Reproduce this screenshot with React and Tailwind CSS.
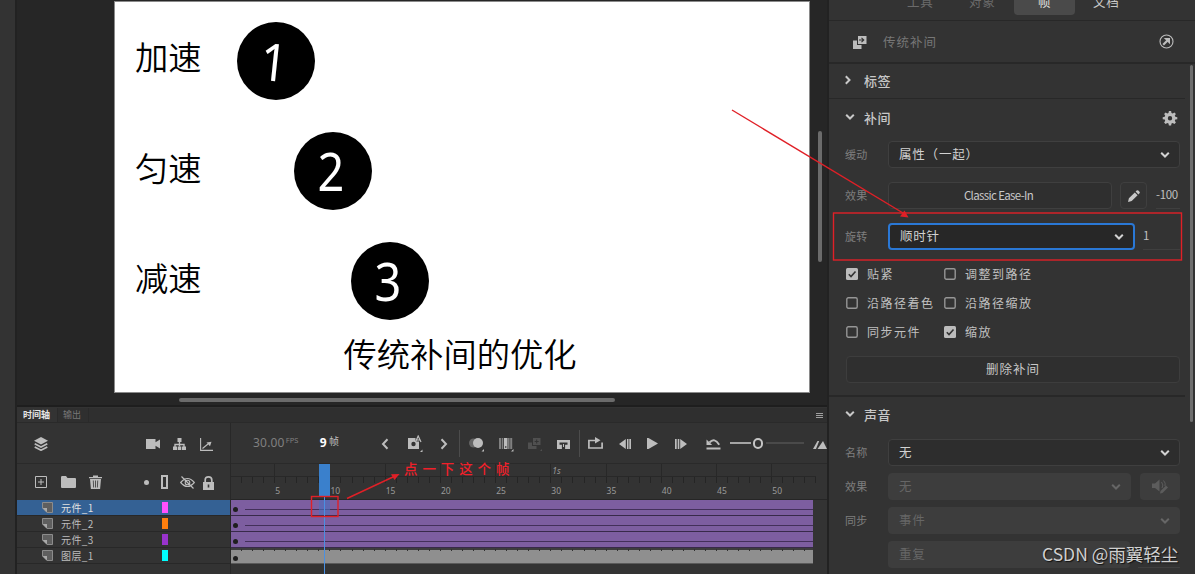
import React from 'react';
import clsx from 'clsx';

const LAYERS = [
  { name: '元件_1', swatch: 'bg-[#ff50ff]', selected: true },
  { name: '元件_2', swatch: 'bg-[#ff7f0e]' },
  { name: '元件_3', swatch: 'bg-[#9933cc]' },
  { name: '图层_1', swatch: 'bg-[#00ffff]', still: true },
];

const FRAMES = Array.from({ length: 53 }, (_, i) => i + 1);

const CHECKS = [
  { label: '贴紧', on: true },
  { label: '调整到路径' },
  { label: '沿路径着色' },
  { label: '沿路径缩放' },
  { label: '同步元件' },
  { label: '缩放', on: true },
];

const Icon = ({ w = 16, h = 16, className, children }) => (
  <svg
    width={w}
    height={h}
    viewBox={`0 0 ${w} ${h}`}
    fill="currentColor"
    className={clsx('block shrink-0', className)}
    aria-hidden
  >
    {children}
  </svg>
);

const Chevron = ({ className }) => (
  <Icon w={10} h={8} className={className}>
    <path d="M1.2 1.8 5 5.500 8.800 1.800" fill="none" stroke="currentColor" strokeWidth="2" />
  </Icon>
);

/* ---------- stage ---------- */

const Ball = ({ className, digit, turned }) => (
  <div
    className={clsx(
      'absolute flex h-[78px] w-[78px] items-center justify-center rounded-full bg-black',
      className,
    )}
  >
    <span
      className={clsx(
        "-ml-[4px] scale-x-90 font-['Noto_Sans'] text-[52px] leading-none font-normal text-white",
        turned && 'rotate-[6deg]',
      )}
    >
      {digit}
    </span>
  </div>
);

const Stage = () => (
  <div className="flex h-[407px] shrink-0 flex-col border-b-2 border-[#1e1e1e] bg-[#262626]">
    <div className="flex">
      <div className="relative ml-[97px] mt-px h-[392px] w-[696px] shrink-0 border border-[#8a8a8a] bg-white text-[33.3px] leading-[40px] font-[350] text-black">
        <span className="absolute left-[20px] top-[34px]">加速</span>
        <span className="absolute left-[20px] top-[145px]">匀速</span>
        <span className="absolute left-[20px] top-[255px]">减速</span>
        <Ball className="left-[121.5px] top-[19.5px]" digit="1" turned />
        <Ball className="left-[178.5px] top-[129.5px]" digit="2" />
        <Ball className="left-[236px] top-[240px]" digit="3" />
        <span className="absolute left-[228.5px] top-[331px] whitespace-nowrap">传统补间的优化</span>
      </div>
      <div className="ml-[8px] mt-[131px] h-[131px] w-[4px] rounded-full bg-[#6b6b6b]" />
    </div>
    <div className="ml-[162px] mt-[5px] h-[4px] w-[436px] shrink-0 rounded-full bg-[#6b6b6b]" />
  </div>
);

/* ---------- timeline ---------- */

const TimelineTabs = () => (
  <div className="flex h-[15px] shrink-0 items-stretch border-b border-[#2a2a2a] bg-[#2f2f2f] text-[9px] leading-[13px]">
    <div className="w-[41px] border-r border-[#2a2a2a] bg-[#333] pl-[6px] font-bold text-[#e6e6e6]">时间轴</div>
    <div className="w-[31px] border-r border-[#2a2a2a] pl-[5px] text-[#777]">输出</div>
    <Icon w={7} h={5} className="mr-[4px] ml-auto mt-[5px] text-[#a0a0a0]">
      <path d="M0 0h7v1H0zM0 2h7v1H0zM0 4h7v1H0z" />
    </Icon>
  </div>
);

const LayerTools = () => (
  <div className="flex h-[41px] items-center border-b border-[#2a2a2a] text-[#bdbdbd]">
    <Icon w={14} h={14} className="ml-[17px] mt-[2px]">
      <path d="M7 0 14 3.7 7 7.4 0 3.7z" />
      <path d="M0.7 6.7 7 10 13.3 6.7M0.7 10 7 13.2 13.3 10" fill="none" stroke="currentColor" strokeWidth="1.7" />
    </Icon>
    <Icon w={14} h={10} className="ml-[98px] mt-[2px]">
      <path d="M0 0h9.500v3.200L14 .5v9L9.500 6.800V10H0z" />
    </Icon>
    <Icon w={13} h={12} className="ml-[13px] mt-[2px]">
      <path d="M4.500 0h4v4h-4zM0 8.500h4V12H0zM4.700 8.500h3.600V12H4.700zM9 8.500h4V12H9z" />
      <path d="M6.500 3v5.500M2 9V6.500h9V9" fill="none" stroke="currentColor" strokeWidth="1.400" />
    </Icon>
    <Icon w={13} h={13} className="ml-[14px] mt-[3px]">
      <path d="M.6 0v12.400H13M2.500 10.500 8 6" fill="none" stroke="currentColor" strokeWidth="1.100" />
      <path d="M6.500 4.500 11.500 3.800 10 8.300z" />
    </Icon>
  </div>
);

const LayerHeader = () => (
  <div className="flex h-[36px] items-center text-[#bdbdbd]">
    <Icon w={12} h={12} className="ml-[18px]">
      <path d="M.5.5h11v11H.5zM6 3v6M3 6h6" fill="none" stroke="currentColor" />
    </Icon>
    <Icon w={15} h={12} className="ml-[14px]">
      <path d="M0 1.200Q0 0 1.200 0H5l1.500 2H14q1 0 1 1v8q0 1-1 1H1q-1 0-1-1z" />
    </Icon>
    <Icon w={13} h={14} className="ml-[13px]">
      <path d="M0 2h4V.5h5V2h4v1.300H0zM1 4h11l-.9 10H1.900z" />
      <path d="M4.300 5.500l.3 7M6.500 5.500v7M8.700 5.500l-.3 7" stroke="#444" strokeWidth=".9" />
    </Icon>
    <div className="ml-[42px] h-[5px] w-[5px] rounded-full bg-[#bdbdbd]" />
    <div className="ml-[12px] h-[14px] w-[7px] border-2 border-[#bdbdbd]" />
    <Icon w={15} h={13} className="ml-[12px]">
      <path d="M.7 6.500Q7.500-1.500 14.300 6.500 7.500 14.500.7 6.500zM1.500.5 13.500 12.500" fill="none" stroke="currentColor" strokeWidth="1.200" />
      <circle cx="7.500" cy="6.500" r="2.300" fill="none" stroke="currentColor" strokeWidth="1.100" />
    </Icon>
    <Icon w={11} h={14} className="ml-[8px] mt-[1px]">
      <path d="M0 6h11v8H0z" />
      <path d="M2.200 7V4Q2.200.9 5.500.9T8.800 4v3" fill="none" stroke="currentColor" strokeWidth="1.700" />
      <path d="M4.700 8.500h1.600v3H4.700z" fill="#333" />
    </Icon>
  </div>
);

const LayerRow = ({ layer }) => (
  <div
    className={clsx(
      'flex h-[16.1px] items-center border-b border-[#282828] text-[#bdbdbd]',
      layer.selected && 'bg-[#346194] text-[#e0e0e0]',
    )}
  >
    <Icon w={11} h={11} className="ml-[25px] text-[#8c8c8c]">
      <path d="M.5.5h10v10H5L.5 6z" fill="#5f5f5f" stroke="currentColor" />
      <path d="M.5 6H5v4.500z" fill="#aaa" />
    </Icon>
    <span className="ml-[8px] w-[101px] text-[10px] leading-[14px] tracking-[0.400px]">{layer.name}</span>
    <div className={clsx('h-[11px] w-[6px]', layer.swatch)} />
  </div>
);

const Playback = () => (
  <div className="flex h-[41px] items-center overflow-hidden border-b border-[#2a2a2a] font-['Noto_Sans','Noto_Sans_CJK_SC',sans-serif] text-[#bdbdbd]">
    <span className="ml-[22px] w-[35px] text-[12px] leading-none tracking-[0.200px] text-[#808080]">30.00</span>
    <span className="-mt-[4px] w-[36px] text-[7.500px] leading-none text-[#808080]">FPS</span>
    <span className="w-[10px] text-[12px] leading-none font-bold text-white">9</span>
    <span className="-mt-[5px] w-[12px] text-[10px] leading-none">帧</span>
    <Icon w={8} h={12} className="ml-[41px] mt-[2px]">
      <path d="M6.500 1.200 2 6l4.500 4.800" fill="none" stroke="currentColor" strokeWidth="2" />
    </Icon>
    <Icon w={15} h={17} className="ml-[19px]">
      <path d="M0 3h7.500v3.500H11V14H0z" />
      <circle cx="5.500" cy="9" r="2.200" fill="#333" />
      <path d="M7.500 7 10.200 1 13 7M8.500 5h3.500" fill="none" stroke="currentColor" strokeWidth="1.200" />
      <path d="M14.500 14.500V17H12z" />
    </Icon>
    <Icon w={8} h={12} className="ml-[17px] mt-[2px]">
      <path d="M1.500 1.200 6 6l-4.500 4.800" fill="none" stroke="currentColor" strokeWidth="2" />
    </Icon>
    <div className="ml-[11px] h-[27px] w-px bg-[#4c4c4c]" />
    <Icon w={16} h={14} className="ml-[9px] mt-[4px]">
      <circle cx="4.500" cy="5" r="4.500" fill="#666" />
      <circle cx="9" cy="5" r="5" />
      <path d="M15 11v2.500h-2.500z" />
    </Icon>
    <Icon w={15} h={14} className="ml-[14px] mt-[4px]">
      <path d="M0 0h2v11H0zM2.700 0h1.600v11H2.700zM9 0h1.600v11H9zM11.200 0h2v11h-2z" fill="#808080" />
      <path d="M5 0h3.500v11H5zM14.500 11v2.500H12z" />
      <path d="M6.300 8h1v2h-1z" fill="#333" />
    </Icon>
    <Icon w={14} h={14} className="ml-[14px] mt-[3px] text-[#505050]">
      <path d="M0 4.500h4V8h4.500v3H0zM5 0h7.500v7H5zM14 11v2h-2z" />
      <path d="M8.700 1.500v4M6.700 3.500h4" stroke="#333" />
    </Icon>
    <Icon w={13} h={9} className="ml-[15px] mt-[2px]">
      <path fillRule="evenodd" d="M0 0h13v9H0zM2.500 2.500v2.300h2.400V9h3.200V4.800h2.400V2.500z" />
      <path d="M6 4h1v3H6z" />
    </Icon>
    <div className="ml-[9px] h-[27px] w-px bg-[#4c4c4c]" />
    <Icon w={15} h={12} className="ml-[8px]">
      <path d="M3 3.500H.9V11h13.200V5.500M3 3.500h5.500" fill="none" stroke="currentColor" strokeWidth="1.700" />
      <path d="M7 0l5.500 3.300L7 6.500z" />
    </Icon>
    <Icon w={12} h={10} className="ml-[16px] mt-[1px]">
      <path d="M6.800 0v10L0 5zM8 0h1.500v10H8zM10.300 0H12v10h-1.700z" />
    </Icon>
    <Icon w={11} h={11} className="ml-[16px] mt-[1px]">
      <path d="M0 0h1.500L11 5.500 1.500 11H0z" />
    </Icon>
    <Icon w={12} h={10} className="ml-[17px] mt-[1px]">
      <path d="M0 0h1.700v10H0zM2.700 0h1.600v10H2.700zM5.200 0 12 5 5.200 10z" />
    </Icon>
    <Icon w={15} h={12} className="ml-[19px] mt-[2px]">
      <path d="M3.500 4.500Q8.500-1 13.200 6.800" fill="none" stroke="currentColor" strokeWidth="1.900" />
      <path d="M.5 1.500V7h5.700zM.5 9.500h14v2H.5z" />
    </Icon>
    <div className="ml-[9px] h-[2px] w-[22px] bg-[#a5a5a5]" />
    <div className="ml-[2px] h-[11px] w-[11px] rounded-full border-2 border-[#c5c5c5]" />
    <div className="ml-[3px] h-[2px] w-[40px] bg-[#4a4a4a]" />
    <Icon w={14} h={8} className="ml-[9px] mt-[3px]">
      <path d="M0 8 4.500 0 6.200 0 3 8zM4.500 8 10 0l4 8z" />
    </Icon>
  </div>
);

const Ruler = () => (
  <div className="relative flex h-[36px] overflow-hidden border-b border-[#262626] text-[8.5px] text-[#9a9a9a]">
    {FRAMES.map((n) => (
      <div key={n} className="flex w-[11.06px] shrink-0 flex-col font-['Noto_Sans']">
        <div
          className={clsx(
            'h-[13px] border-b border-[#282828] pl-[1px] leading-[13px] whitespace-nowrap',
            n % 5 === 4 && 'border-r',
          )}
        >
          {n === 30 && <span className="italic">1s</span>}
        </div>
        <div className="h-[6px] border-r border-[#252525]" />
        <div className="leading-[16px] whitespace-nowrap">{n % 5 === 0 && n}</div>
      </div>
    ))}
    <div className="absolute left-[88px] top-[0px] h-[33px] w-[11px] bg-[#3a80cc]" />
  </div>
);

const Track = ({ layer }) =>
  layer.still ? (
    <div className="relative flex h-[16.100px] w-[582px] items-center border-t-2 border-b border-[#5a5a5a] border-t-[#3d3d3d] bg-[#8f8f8f]">
      <div className="absolute -top-px left-0 flex h-[2px] w-full overflow-hidden">
        {FRAMES.map((n) => (
          <div key={n} className="w-[11.060px] shrink-0 border-r border-[#303030]" />
        ))}
      </div>
      <div className="ml-[2px] mt-[3px] h-[5px] w-[5px] rounded-full bg-[#1e1e1e]" />
    </div>
  ) : (
    <div className="flex h-[16.100px] w-[582px] items-center border-b border-[#382a4a] bg-[#7d5ea0]">
      <div className="ml-[2px] mt-[3px] h-[5px] w-[5px] rounded-full bg-[#1e1e1e]" />
      <div className="mt-[3px] ml-[7px] h-px flex-1 bg-[#43305a]" />
    </div>
  );

const Timeline = () => (
  <div className="flex min-h-0 flex-1 flex-col pt-[1px]">
    <TimelineTabs />
    <div className="flex min-h-0 flex-1">
      <div className="w-[214px] shrink-0 border-r border-[#282828]">
        <LayerTools />
        <LayerHeader />
        {LAYERS.map((l) => (
          <LayerRow key={l.name} layer={l} />
        ))}
      </div>
      <div className="relative min-w-0 flex-1">
        <Playback />
        <Ruler />
        {LAYERS.map((l) => (
          <Track key={l.name} layer={l} />
        ))}
        <div className="absolute left-[88px] top-[77px] h-[15px] w-[11px] bg-[#4a6fc0]/60" />
        <div className="absolute left-[93px] top-[73px] h-[80px] w-px bg-[#4a90e2]" />
      </div>
    </div>
  </div>
);

/* ---------- properties panel ---------- */

const Label = ({ children }) => (
  <span className="w-[43px] shrink-0 text-[11px] leading-none tracking-[0.300px] text-[#7f7f7f]">{children}</span>
);

const Select = ({ children, className, disabled, focused }) => (
  <div
    className={clsx(
      'flex h-[27px] items-center justify-between rounded-[4px] pr-[9px] pl-[10px] text-[12.500px] tracking-[0.800px]',
      disabled
        ? 'border border-[#3d3d3d] bg-[#3d3d3d] text-[#666]'
        : focused
          ? 'border-2 border-[#2a78d6] bg-[#272727] pl-[9px] text-[#d2d2d2]'
          : 'border border-[#3f3f3f] bg-[#2d2d2d] text-[#d2d2d2]',
      className,
    )}
  >
    <span>{children}</span>
    <Chevron />
  </div>
);

const Check = ({ on, label }) => (
  <div className="flex items-center text-[12px] leading-none tracking-[1.500px] whitespace-nowrap text-[#c0c0c0]">
    <Icon w={12} h={12} className="mr-[9px]">
      {on ? (
        <>
          <rect width="12" height="12" rx="1.500" fill="#bcbcbc" />
          <path d="M2.800 6.200 5 8.500 9.500 3.500" fill="none" stroke="#333" strokeWidth="1.600" />
        </>
      ) : (
        <rect x=".8" y=".8" width="10.400" height="10.400" rx="1.500" fill="none" stroke="#969696" strokeWidth="1.400" />
      )}
    </Icon>
    {label}
  </div>
);

const SectionTitle = ({ children, closed }) => (
  <div className="flex items-center pb-[2px] text-[13px] leading-none font-medium tracking-[0.500px] text-[#c8c8c8]">
    <Chevron className={clsx('mr-[9px]', closed && '-ml-[2px] mr-[11px] -rotate-90')} />
    {children}
  </div>
);

const Properties = () => (
  <aside className="flex h-full w-[366px] shrink-0 flex-col bg-[#333]">
    <div className="flex h-[21px] shrink-0 items-start border-b border-[#282828] text-[12.500px] leading-[14px] tracking-[0.700px]">
      <span className="-mt-[5px] ml-[78px] w-[62px] text-[#6b6b6b]">工具</span>
      <span className="-mt-[5px] w-[45px] text-[#6b6b6b]">对象</span>
      <div className="flex h-[15px] w-[61px] justify-center rounded-b-[4px] bg-[#4a4a4a] text-[#e0e0e0]">
        <span className="-mt-[5px]">帧</span>
      </div>
      <span className="-mt-[5px] ml-[18px] text-[#c8c8c8]">文档</span>
    </div>

    <div className="flex h-[43px] shrink-0 items-center border-b-2 border-[#282828] pr-[21px] pl-[24px] text-[#bdbdbd]">
      <Icon w={14} h={13} className="mt-[2px]">
        <path d="M0 4.500h4V9h4.500v4H0zM5 0h8.500v8H5z" />
        <path d="M6 4h4.500M8.500 1.800l2.300 2.200-2.300 2.200" fill="none" stroke="#333" strokeWidth="1.100" />
      </Icon>
      <span className="ml-[16px] mt-[1px] text-[12.500px] leading-none tracking-[1px] text-[#777]">传统补间</span>
      <Icon w={15} h={15} className="ml-auto">
        <circle cx="7.500" cy="7.500" r="6.500" fill="none" stroke="currentColor" strokeWidth="1.100" />
        <path d="M4.200 10.800 9.500 5.500" fill="none" stroke="currentColor" strokeWidth="2.200" />
        <path d="M4.800 4h6.200v6.200z" />
      </Icon>
    </div>

    <div className="flex min-h-0 flex-1 justify-between">
      <div className="flex w-[356px] flex-col">
        <div className="flex h-[35px] shrink-0 items-center border-b border-[#282828] pl-[16px]">
          <SectionTitle closed>标签</SectionTitle>
        </div>

        <div className="h-[298px] shrink-0 border-b-2 border-[#282828] pr-[5px] pl-[16px]">
          <div className="flex h-[38px] items-center justify-between pr-[2px]">
            <SectionTitle>补间</SectionTitle>
            <Icon w={16} h={16} className="text-[#bdbdbd]">
              <path
                fillRule="evenodd"
                d="M6.900 1h2.200l.4 2 1.200.5 1.700-1.100 1.500 1.500-1.100 1.700.5 1.200 2 .4v2l-2 .4-.5 1.200 1.100 1.700-1.500 1.500-1.700-1.100-1.200.5-.4 2H6.900l-.4-2-1.200-.5-1.700 1.100-1.500-1.500 1.100-1.700-.5-1.200-2-.4v-2l2-.4.5-1.200-1.100-1.700 1.500-1.500 1.700 1.100L6.500 3zM8 6a2.200 2.200 0 1 0 0 4.400A2.200 2.200 0 0 0 8 6z"
              />
            </Icon>
          </div>
          <div className="mt-[4px] flex items-center">
            <Label>缓动</Label>
            <Select className="flex-1">属性（一起）</Select>
          </div>
          <div className="mt-[14px] flex items-center">
            <Label>效果</Label>
            <div className="flex h-[27px] w-[224px] items-center justify-center rounded-[4px] border border-[#3f3f3f] bg-[#2f2f2f] pr-[3px] text-[11.500px] tracking-[-0.650px] text-[#c8c8c8]">
              Classic Ease-In
            </div>
            <div className="ml-[8px] flex h-[27px] w-[27px] items-center justify-center rounded-[4px] border border-[#3f3f3f] text-[#c8c8c8]">
              <Icon w={12} h={12}>
                <path d="M0 12 .9 8.300 6.800 2.400 9.600 5.200 3.700 11.100zM7.600 1.600 8.700.5q.8-.7 1.600 0l1.200 1.200q.7.8 0 1.600L10.400 4.400z" />
              </Icon>
            </div>
            <div className="ml-[9px] flex h-[27px] flex-1 items-center border-b border-[#3f3f3f] text-[11.500px] tracking-[-0.300px] text-[#c0c0c0]">
              -100
            </div>
          </div>
          <div className="mt-[14px] flex items-center">
            <Label>旋转</Label>
            <Select className="w-[247px]" focused>
              顺时针
            </Select>
            <div className="ml-[8px] flex h-[27px] flex-1 items-center border-b border-[#3f3f3f] text-[11.500px] text-[#c0c0c0]">
              1
            </div>
          </div>
          <div className="mt-[9px] grid grid-cols-[98px_1fr] auto-rows-[29px] items-center pl-[1px]">
            {CHECKS.map((c) => (
              <Check key={c.label} {...c} />
            ))}
          </div>
          <div className="mt-[10px] ml-px flex h-[27px] items-center justify-center rounded-[4px] border border-[#3d3d3d] bg-[#2f2f2f] text-[12.500px] tracking-[1px] text-[#c8c8c8]">
            删除补间
          </div>
        </div>

        <div className="pr-[5px] pl-[16px]">
          <div className="flex h-[36px] items-center">
            <SectionTitle>声音</SectionTitle>
          </div>
          <div className="mt-[6px] flex items-center">
            <Label>名称</Label>
            <Select className="flex-1">无</Select>
          </div>
          <div className="mt-[7px] flex items-center">
            <Label>效果</Label>
            <Select className="w-[243px]" disabled>
              无
            </Select>
            <div className="ml-[9px] flex h-[27px] flex-1 items-center justify-center rounded-[4px] bg-[#3d3d3d] text-[#5c5c5c]">
              <Icon w={17} h={15}>
                <path d="M0 4.500h3L7.500.5v12L3 9H0z" />
                <path d="M9.500 3Q12 6 10 9M11.500 1.500Q14 4 13 7" fill="none" stroke="currentColor" />
                <path d="M8 14.500l.5-2.500 5.500-5.500 2 2L10.500 14z" />
              </Icon>
            </div>
          </div>
          <div className="mt-[7px] flex items-center">
            <Label>同步</Label>
            <Select className="flex-1" disabled>
              事件
            </Select>
          </div>
          <div className="mt-[7px] flex items-center">
            <div className="ml-[43px] flex h-[27px] w-[242px] items-center rounded-[4px] bg-[#3d3d3d] pl-[11px] text-[12.500px] tracking-[0.800px] text-[#666]">
              重复
            </div>
            <div className="ml-[8px] h-[27px] flex-1 border-b border-[#3f3f3f]" />
          </div>
        </div>
      </div>
      <div className="mt-[1px] mr-[2px] h-[357px] w-[3px] rounded-full bg-[#6e6e6e]" />
    </div>
  </aside>
);

/* red boxes, arrows and the note drawn over the window */
const Annotations = () => (
  <div className="pointer-events-none absolute inset-0">
    <svg width="1195" height="574" className="absolute inset-0" fill="none" stroke="#e02027" strokeWidth="1.400">
      <path d="M732 110 903 213" />
      <path d="M908.500 217.500 900 216.500 904.500 210.500z" fill="#e02027" stroke="none" />
      <rect x="833.500" y="213" width="348" height="47" />
      <rect x="311.500" y="496.500" width="26.500" height="20" />
      <path d="M347 498.500 394 476.500" />
      <path d="M399.500 474 391 474.200 394.500 480z" fill="#e02027" stroke="none" />
    </svg>
    <span className="absolute top-[460px] left-[404px] text-[13.500px] leading-[17px] font-medium tracking-[4.900px] whitespace-nowrap text-[#f0202a]">
      点一下这个帧
    </span>
    <span className="absolute top-[542px] left-[1042px] text-[17.500px] leading-[24px] whitespace-nowrap text-[#d0d0d0] [text-shadow:1px_1px_1px_#111]">
      CSDN @雨翼轻尘
    </span>
  </div>
);

const App = () => (
  <div className="relative flex h-[574px] w-[1195px] overflow-hidden bg-[#333] font-['Noto_Sans_CJK_SC',sans-serif]">
    <div className="w-[17px] shrink-0 border-r-2 border-[#222]" />
    <main className="flex w-[812px] shrink-0 flex-col border-r-2 border-[#222]">
      <Stage />
      <Timeline />
    </main>
    <Properties />
    <Annotations />
  </div>
);

export default App;
